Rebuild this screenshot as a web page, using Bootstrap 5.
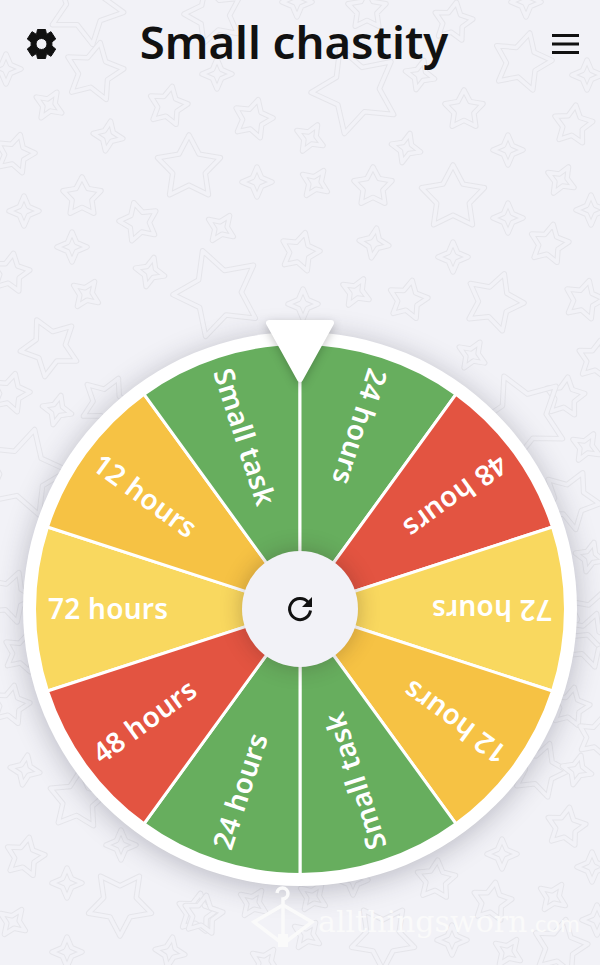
<!DOCTYPE html>
<html lang="en">
<head>
    <meta charset="UTF-8">
    <meta name="viewport" content="width=device-width, initial-scale=1.0">
    <title>Small chastity</title>
    <link href="https://cdn.jsdelivr.net/npm/bootstrap@5.3.3/dist/css/bootstrap.min.css" rel="stylesheet">
    <style>
        html, body { height: 100%; }
        body { background-color: #f2f2f7; font-family: "Noto Sans", sans-serif; color: #111; overflow: hidden; }
        .stars-bg { position: absolute; inset: 0; width: 600px; height: 965px; }
        .star-out { fill: none; stroke: #e5e5ea; stroke-width: 5.5; stroke-linejoin: round; }
        .star-in { fill: none; stroke: #f2f2f7; stroke-width: 3.5; stroke-linejoin: round; }
        .app-shell { position: relative; width: 600px; height: 965px; }
        .top-bar { height: 88px; padding: 0 21px 0 27px; }
        .page-title { font-size: 45.5px; font-weight: 600; line-height: 1; margin: 0 20px 4px 0; }
        .icon-btn { background: none; border: 0; padding: 0; line-height: 0; color: #111; }
        .wheel-disc { position: relative; width: 554px; height: 554px; margin: 244px auto 0; background: #fff; box-shadow: 0 4px 28px rgba(40,40,60,.28); }
        .wheel-disc svg.segments { display: block; width: 554px; height: 554px; }
        .wheel-label { font-family: "Noto Sans", sans-serif; font-size: 28px; font-weight: 600; letter-spacing: .25px; fill: #fff; }
        .hub-btn { position: absolute; left: 219px; top: 219px; width: 116px; height: 116px; background: #f2f2f7; border: 0; box-shadow: 0 0 22px rgba(50,30,30,.28); }
        .pointer-mark { position: absolute; left: 240px; top: -13px; filter: drop-shadow(0 3px 5px rgba(0,0,0,.22)); }
        .brand-mark { position: absolute; left: 250px; top: 884px; color: #fafafa; }
        .brand-name { font-family: "DejaVu Serif", serif; font-size: 30px; line-height: 1; margin: 0 0 11px 2px; }
        .brand-tld { font-family: "Lato", sans-serif; font-size: 24px; line-height: 1; margin: 0 0 13px 2px; }
    </style>
</head>
<body>
    <svg class="stars-bg" id="stars" viewBox="0 0 600 965"></svg>

    <div class="app-shell">
        <header class="top-bar d-flex align-items-center justify-content-between">
            <button class="icon-btn" type="button" aria-label="Settings">
                <svg width="29" height="30" viewBox="-14.5 -15 29 30" fill="currentColor">
                    <path fill-rule="evenodd" d="M-4-14.5H4L5-9.6 9.5-12.3 14.2-5 10.4-2 10.4 2 14.2 5 9.5 12.3 5 9.6 4 14.5H-4L-5 9.6-9.5 12.3-14.2 5-10.4 2-10.4-2-14.2-5-9.5-12.3-5-9.6ZM0-5.5A5.5 5.5 0 1 0 0 5.5 5.5 5.5 0 1 0 0-5.5Z" stroke="currentColor" stroke-width="1" stroke-linejoin="round"/>
                </svg>
            </button>
            <h1 class="page-title">Small chastity</h1>
            <button class="icon-btn" type="button" aria-label="Menu">
                <svg width="27" height="20" viewBox="0 0 27 20" fill="currentColor">
                    <rect x="0" y="0" width="27" height="3"/>
                    <rect x="0" y="8.5" width="27" height="3"/>
                    <rect x="0" y="17" width="27" height="3"/>
                </svg>
            </button>
        </header>

        <div class="wheel-disc rounded-circle">
            <svg class="segments" id="wheel" viewBox="-277 -277 554 554"></svg>
            <button class="hub-btn rounded-circle d-flex align-items-center justify-content-center" type="button" aria-label="Spin">
                <svg width="28" height="28" viewBox="-14 -14 28 28">
                    <path d="M8.2 -6.6A10.5 10.5 0 1 0 10.5 1.5" fill="none" stroke="#111" stroke-width="3"/>
                    <polygon points="12,-12 12,-2 2,-2" fill="#111"/>
                </svg>
            </button>
            <svg class="pointer-mark" width="74" height="66" viewBox="0 0 74 66">
                <path d="M6 4H68L37 60Z" fill="#fff" stroke="#fff" stroke-width="6" stroke-linejoin="round"/>
            </svg>
        </div>

        <div class="brand-mark d-flex align-items-end">
            <svg width="66" height="64" viewBox="0 0 66 64" fill="none" stroke="currentColor" stroke-width="3.5">
                <path d="M27 9A5.5 5.5 0 1 1 33 15V21L4 38 33 60 62 38 33 21"/>
                <path d="M33 21V60"/>
                <polygon points="28,50 38,50 38,63 28,63" fill="currentColor" stroke="none"/>
            </svg>
            <span class="brand-name">allthingsworn</span><span class="brand-tld">.com</span>
        </div>
    </div>

    <script>
        // x, y, radius, rotation, points
        const STARS = [
            [86,7,38,170,5],[214,15,30,200,5],[356,90,45,195,5],[94,72,30,12,5],[522,62,30,15,5],[189,168,33,0,5],[453,198,33,0,5],
            [218,293,45,-20,5],[494,302,30,20,5],[168,106,20,12,5],[464,110,20,0,5],[253,119,20,15,5],[573,125,20,8,5],[15,154,20,15,5],
            [373,187,20,0,5],[82,197,20,0,5],[139,222,20,-15,5],[300,252,20,15,5],[549,244,20,12,5],[10,273,20,10,5],[408,300,20,12,5],
            [584,300,20,15,5],[453,22,20,10,5],[367,10,20,0,5],[297,2,15,0,4],[526,2,15,0,4],
            [49,105,15,32,4],[108,136,15,10,4],[310,138,15,30,4],[406,148,15,15,4],[508,150,15,0,4],[257,182,15,0,4],[315,183,15,35,4],
            [561,180,15,30,4],[24,211,15,0,4],[508,218,15,0,4],[221,228,15,35,4],[72,247,15,0,4],[374,243,15,10,4],[453,257,15,0,4],
            [150,272,15,15,4],[86,294,15,35,4],[303,304,15,0,4],[356,292,15,30,4],[217,74,15,0,4],[420,75,15,15,4],[6,69,15,0,4],[591,210,15,0,4],[587,75,15,0,4],
            [50,347,30,190,5],[10,393,20,15,5],[57,410,15,15,4],[107,403,27,25,5],[23,473,45,15,5],[10,597,26,20,5],
            [472,355,15,32,4],[565,397,20,8,5],[523,417,45,-25,5],[586,447,15,30,4],[570,500,30,25,5],[590,557,15,15,4],[597,360,20,10,5],[593,620,30,20,5],
            [10,705,20,12,5],[25,770,15,10,4],[78,800,30,5,5],[121,845,15,0,4],[25,857,20,12,5],[67,883,15,0,4],[120,903,33,180,5],[13,922,15,35,4],
            [67,952,15,0,4],[170,952,15,10,4],[197,913,20,10,5],[23,653,20,15,5],[570,707,20,12,5],[597,737,20,15,5],[540,770,28,20,5],[577,770,15,15,4],
            [566,827,20,10,5],[502,854,15,0,4],[592,867,15,0,4],[436,880,20,5,5],[553,897,15,35,4],[492,902,20,10,5],[452,940,15,0,4],[508,952,15,35,4],
            [560,947,28,12,5],[597,920,15,0,4],[587,640,28,20,5],[313,897,15,35,4],[253,903,15,35,4],[203,915,20,10,5],[383,937,33,180,5],[307,935,15,35,4],[265,962,15,35,4],[353,880,15,0,4]
        ];

        function starPath(x, y, r, rot, n) {
            const inner = n === 5 ? r * 0.52 : r * 0.42;
            let pts = [];
            for (let i = 0; i < n * 2; i++) {
                const a = (rot - 90 + i * 180 / n) * Math.PI / 180;
                const rad = i % 2 ? inner : r;
                pts.push((x + rad * Math.cos(a)).toFixed(1) + ' ' + (y + rad * Math.sin(a)).toFixed(1));
            }
            return 'M' + pts.join('L') + 'Z';
        }

        let starSvg = '';
        STARS.forEach(s => {
            const d = starPath(s[0], s[1], s[2], s[3], s[4]);
            starSvg += `<path class="star-out" d="${d}"/><path class="star-in" d="${d}"/>`;
        });
        document.getElementById('stars').innerHTML = starSvg;

        // first entry is the left wedge, then clockwise
        const ITEMS = [
            ['72 hours', '#f9d85f'], ['12 hours', '#f6c244'], ['Small task', '#67ae5e'], ['24 hours', '#67ae5e'], ['48 hours', '#e35441'],
            ['72 hours', '#f9d85f'], ['12 hours', '#f6c244'], ['Small task', '#67ae5e'], ['24 hours', '#67ae5e'], ['48 hours', '#e35441']
        ];
        const R = 265.5;
        let wheelSvg = '';
        ITEMS.forEach((item, i) => {
            const a = 18 * Math.PI / 180;
            const x = (-R * Math.cos(a)).toFixed(2), y = (R * Math.sin(a)).toFixed(2);
            wheelSvg += `<g transform="rotate(${i * 36})">`
                + `<path d="M0 0L${x} ${y}A${R} ${R} 0 0 1 ${x} ${-y}Z" fill="${item[1]}" stroke="#fff" stroke-width="3"/>`
                + `<text class="wheel-label" x="-252" y="9.5">${item[0]}</text></g>`;
        });
        document.getElementById('wheel').innerHTML = wheelSvg;
    </script>
    <script src="https://cdn.jsdelivr.net/npm/bootstrap@5.3.3/dist/js/bootstrap.bundle.min.js"></script>
</body>
</html>
